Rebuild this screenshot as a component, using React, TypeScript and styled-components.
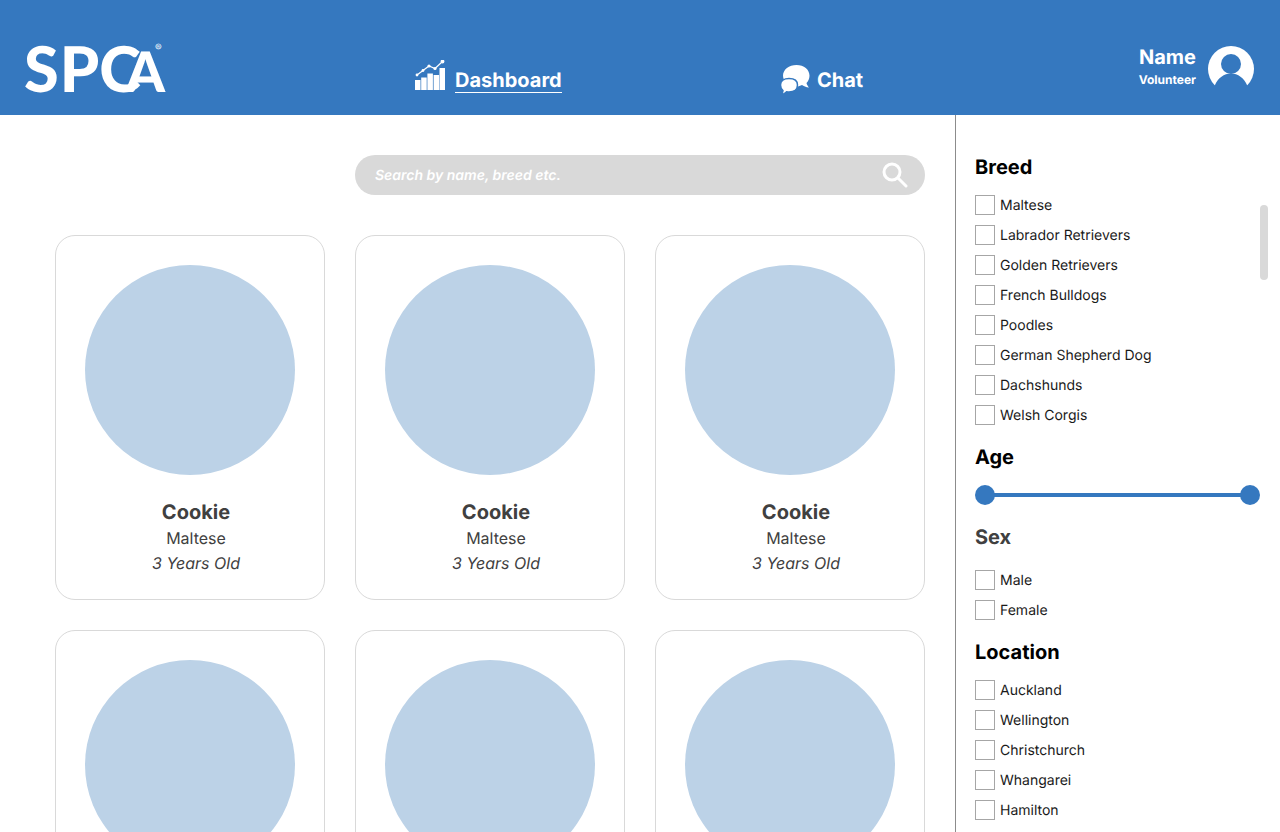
import React from 'react';
import styled, { createGlobalStyle } from 'styled-components';

const BLUE = '#3578bf';

const GlobalStyle = createGlobalStyle`
  html, body { margin:0; padding:0; height:832px; overflow:hidden; background:#fff; }
  body { font-family:Inter, "Liberation Sans", sans-serif; text-rendering:geometricPrecision; }
  * { box-sizing:border-box; }
`;

const Page = styled.div` width:1280px; height:832px; overflow:hidden; display:flex; flex-direction:column; `;

const Header = styled.header`
  height:115px; flex:none; background:${BLUE}; color:#fff;
  display:flex; align-items:flex-end; padding:0 26px 20px 26px;
`;
const Logo = styled.div`
  width:141px; height:50px; margin-bottom:1px; flex:none; position:relative; white-space:nowrap;
  display:flex; align-items:baseline;
  font-family:Lato, sans-serif; font-weight:900; font-size:63px; line-height:50px;
`;
const LogoLetter = styled.span<{ $size?: number; $left?: number }>`
  font-size:${({ $size }) => $size ?? 63}px;
  margin-left:${({ $left }) => $left ?? 0}px;
`;
const LogoMark = styled.sup`
  position:absolute; left:129px; top:-1px; font-size:10px; line-height:10px;
  font-family:Inter, sans-serif; font-weight:400;
`;
const Nav = styled.nav` display:flex; align-items:center; margin-left:248px; `;
const NavItem = styled.a<{ $width: number; $gap: number }>`
  display:flex; align-items:center; gap:${({ $gap }) => $gap}px; width:${({ $width }) => $width}px;
  color:#fff; font-size:20px; font-weight:700; line-height:24px;
`;
const NavText = styled.span<{ $active?: boolean }>`
  border-bottom:${({ $active }) => ($active ? '1px solid #fff' : '1px solid transparent')};
`;
const ChartSvg = styled.svg` flex:none; transform:translateY(-5px); `;
const Account = styled.div` margin-left:auto; display:flex; align-items:center; gap:12px; margin-bottom:3px; `;
const AccountText = styled.div` text-align:right; font-weight:700; margin-bottom:2px; `;
const AccountName = styled.div` font-size:20px; line-height:24px; margin-top:-1px; `;
const AccountRole = styled.div` font-size:12px; line-height:20px; margin-top:1px; `;

const Body = styled.div` flex:1; display:flex; min-height:0; `;
const Main = styled.main`
  width:956px; flex:none; border-right:1px solid #8c8c8c; padding:40px 30px 0 55px;
`;
const SearchBar = styled.div`
  width:570px; height:40px; margin-left:300px; border-radius:20px; background:#d9d9d9;
  display:flex; align-items:center; justify-content:space-between; padding:0 17px 0 20px;
  color:#fff; font-size:14px; font-weight:600; font-style:italic;
`;
const Grid = styled.div` display:grid; grid-template-columns:repeat(3,270px); gap:30px; margin-top:40px; `;
const Card = styled.article`
  height:365px; border:1px solid #d9d9d9; border-radius:20px; padding:29px 29px 0;
  display:flex; flex-direction:column; align-items:center; color:#404040;
`;
const Photo = styled.div` width:210px; height:210px; flex:none; border-radius:50%; background:#bcd2e7; `;
const CardText = styled.div` margin-top:24px; margin-left:12px; text-align:center; `;
const PetName = styled.div` font-size:20px; font-weight:700; line-height:26px; `;
const PetBreed = styled.div` font-size:16px; line-height:26px; `;
const PetAge = styled.div` font-size:16px; font-style:italic; line-height:24px; `;

const Sidebar = styled.aside` flex:1; position:relative; padding:40px 20px 0 19px; `;
const ScrollThumb = styled.div`
  position:absolute; left:304px; top:90px; width:8px; height:75px; border-radius:4px; background:#d9d9d9;
`;
const Section = styled.section` margin-bottom:20px; `;
const Heading = styled.h3<{ $muted?: boolean; $gap?: number }>`
  margin:0 0 ${({ $gap }) => $gap ?? 16}px; font-size:20px; font-weight:700; line-height:24px;
  color:${({ $muted }) => ($muted ? '#404040' : '#000')};
`;
const Options = styled.div` display:flex; flex-direction:column; gap:10px; `;
const Option = styled.label` display:flex; align-items:center; gap:5px; height:20px; font-size:14px; line-height:20px; color:#1a1a1a; `;
const OptionText = styled.span` margin-top:2px; `;
const Box = styled.span` width:20px; height:20px; flex:none; border:1px solid #a6a6a6; background:#fff; `;
const Slider = styled.div`
  width:285px; height:20px; display:flex; align-items:center; justify-content:space-between; position:relative;
`;
const Track = styled.div` position:absolute; left:10px; right:10px; top:8px; height:4px; background:${BLUE}; `;
const Thumb = styled.span` width:20px; height:20px; border-radius:50%; background:${BLUE}; position:relative; `;

const ChartIcon = () => (
  <ChartSvg width="30" height="30" viewBox="0 0 30 30" fill="#fff">
    <rect x="0" y="20" width="5.500" height="10" />
    <rect x="6.200" y="17.500" width="5.500" height="12.500" />
    <rect x="12.400" y="13.500" width="5.500" height="16.500" />
    <rect x="18.600" y="15" width="5.500" height="15" />
    <rect x="24.500" y="8" width="5.500" height="22" />
    <path d="M2 15 L14 6 L20 8.500 L27.500 1.500" fill="none" stroke="#fff" strokeWidth="1.200" />
    <circle cx="2" cy="15" r="1.400" />
    <circle cx="8" cy="10.500" r="1.400" />
    <circle cx="14" cy="6" r="1.600" />
    <circle cx="20" cy="8.500" r="1.600" />
    <circle cx="27.500" cy="1.500" r="1.900" />
  </ChartSvg>
);

const ChatIcon = () => (
  <svg width="30" height="30" viewBox="0 0 30 30" fill="#fff">
    <path d="M15.500 0 C23 0 28.500 4.500 28.500 10.800 C28.500 14 27 16.500 25.500 18 C25.800 19.500 26.800 21.300 28 22.500 C25 22.300 22.500 21.200 21 20 C19.300 20.800 17.500 21.500 15.500 21.500 C8 21.500 2 16.500 2 10.800 C2 4.500 8 0 15.500 0 Z" />
    <path d="M8 13.500 C13.300 13.500 16.500 16 16.500 20 C16.500 24 13.300 27 8 27 C7.200 27 6.400 26.900 5.600 26.800 C4.300 28.200 2.500 29.200 0.300 29.800 C1.400 28.400 1.900 27.100 2 25.500 C0.500 24.200 -0.500 22.200 -0.500 20 C-0.500 16 3 13.500 8 13.500 Z" stroke={BLUE} strokeWidth="1.500" />
  </svg>
);

const UserIcon = () => (
  <svg width="46" height="46" viewBox="0 0 46 46">
    <circle cx="23" cy="23" r="23" fill="#fff" />
    <circle cx="23" cy="18" r="10" fill={BLUE} />
    <path d="M7 39 C10 32 16 27.500 23 27.500 C30 27.500 36 32 39 39 L46 46 L0 46 Z" fill={BLUE} />
  </svg>
);

const SearchIcon = () => (
  <svg width="26" height="26" viewBox="0 0 26 26" fill="none" stroke="#fff" strokeWidth="3" strokeLinecap="round">
    <circle cx="10" cy="10" r="8" />
    <path d="M16 16 L24 24" />
  </svg>
);

const breeds = ['Maltese', 'Labrador Retrievers', 'Golden Retrievers', 'French Bulldogs', 'Poodles', 'German Shepherd Dog', 'Dachshunds', 'Welsh Corgis'];
const sexes = ['Male', 'Female'];
const locations = ['Auckland', 'Wellington', 'Christchurch', 'Whangarei', 'Hamilton'];

const OptionList = ({ items }: { items: string[] }) => (
  <Options>
    {items.map((item) => (
      <Option key={item}><Box /><OptionText>{item}</OptionText></Option>
    ))}
  </Options>
);

export default function App() {
  return (
    <Page>
      <GlobalStyle />
      <Header>
        <Logo>
          <LogoLetter $left={-2}>S</LogoLetter>
          <LogoLetter $left={1}>P</LogoLetter>
          <LogoLetter $left={0}>C</LogoLetter>
          <LogoLetter $size={56} $left={-15}>A</LogoLetter>
          <LogoMark>®</LogoMark>
        </Logo>
        <Nav>
          <NavItem $width={366} $gap={10}><ChartIcon /><NavText $active>Dashboard</NavText></NavItem>
          <NavItem $width={100} $gap={6}><ChatIcon /><NavText>Chat</NavText></NavItem>
        </Nav>
        <Account>
          <AccountText>
            <AccountName>Name</AccountName>
            <AccountRole>Volunteer</AccountRole>
          </AccountText>
          <UserIcon />
        </Account>
      </Header>
      <Body>
        <Main>
          <SearchBar>
            <span>Search by name, breed etc.</span>
            <SearchIcon />
          </SearchBar>
          <Grid>
            {Array.from({ length: 6 }).map((_, i) => (
              <Card key={i}>
                <Photo />
                <CardText>
                  <PetName>Cookie</PetName>
                  <PetBreed>Maltese</PetBreed>
                  <PetAge>3 Years Old</PetAge>
                </CardText>
              </Card>
            ))}
          </Grid>
        </Main>
        <Sidebar>
          <ScrollThumb />
          <Section>
            <Heading>Breed</Heading>
            <OptionList items={breeds} />
          </Section>
          <Section>
            <Heading>Age</Heading>
            <Slider><Track /><Thumb /><Thumb /></Slider>
          </Section>
          <Section>
            <Heading $muted $gap={21}>Sex</Heading>
            <OptionList items={sexes} />
          </Section>
          <Section>
            <Heading>Location</Heading>
            <OptionList items={locations} />
          </Section>
        </Sidebar>
      </Body>
    </Page>
  );
}
